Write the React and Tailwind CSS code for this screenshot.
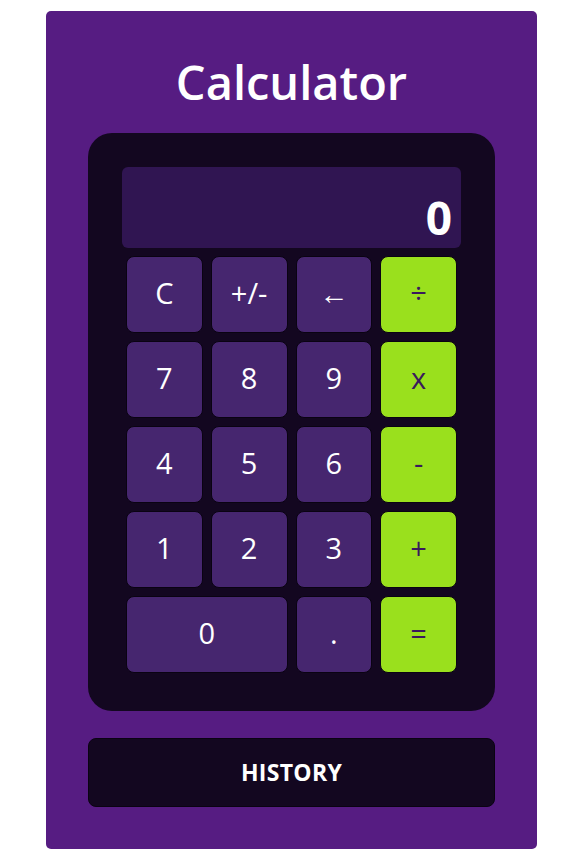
import React, { useState } from 'react';

const keys = [
  { label: 'C', kind: 'fn' },
  { label: '+/-', kind: 'fn' },
  { label: '←', kind: 'fn' },
  { label: '÷', kind: 'op' },
  { label: '7' }, { label: '8' }, { label: '9' }, { label: 'x', kind: 'op' },
  { label: '4' }, { label: '5' }, { label: '6' }, { label: '-', kind: 'op' },
  { label: '1' }, { label: '2' }, { label: '3' }, { label: '+', kind: 'op' },
  { label: '0', wide: true }, { label: '.' }, { label: '=', kind: 'op' },
];

const App = () => {
  const [display] = useState('0');

  return (
    <div className="min-h-screen bg-white pt-[11px] pb-[12px]" style={{ fontFamily: '"Open Sans", "Noto Sans", sans-serif' }}>
      <div className="mx-auto w-[491px] rounded-[5px] bg-[#561c82] px-[42px] pt-[42px] pb-[42px]">
        <h1 className="text-center text-[47px] leading-[58px] font-semibold text-white mb-[22px]">
          Calculator
        </h1>

        {/* calculator body */}
        <div className="rounded-[24px] bg-[#130720] p-[34px]">
          <div className="h-[81px] rounded-[6px] bg-[#301552] flex items-end justify-end px-[9px] pb-[8px] mb-[4px]">
            <span className="text-[46px] leading-none font-bold text-white">{display}</span>
          </div>

          <div className="grid grid-cols-4">
            {keys.map((k, i) => (
              <button
                key={i}
                className={
                  'm-[4px] h-[77px] rounded-[8px] border border-[#0a0312] flex items-center justify-center pb-[4px] text-[29px] ' +
                  (k.wide ? 'col-span-2 ' : '') +
                  (k.kind === 'op' ? 'bg-[#9ae01d] text-[#3a1a5c]' : 'bg-[#46266f] text-white')
                }
              >
                {k.label}
              </button>
            ))}
          </div>
        </div>

        <button className="mt-[27px] w-full h-[69px] rounded-[8px] border border-[#0a0312] bg-[#130720] text-white text-[23px] font-bold tracking-[0.3px]">
          HISTORY
        </button>
      </div>
    </div>
  );
};

export default App;
